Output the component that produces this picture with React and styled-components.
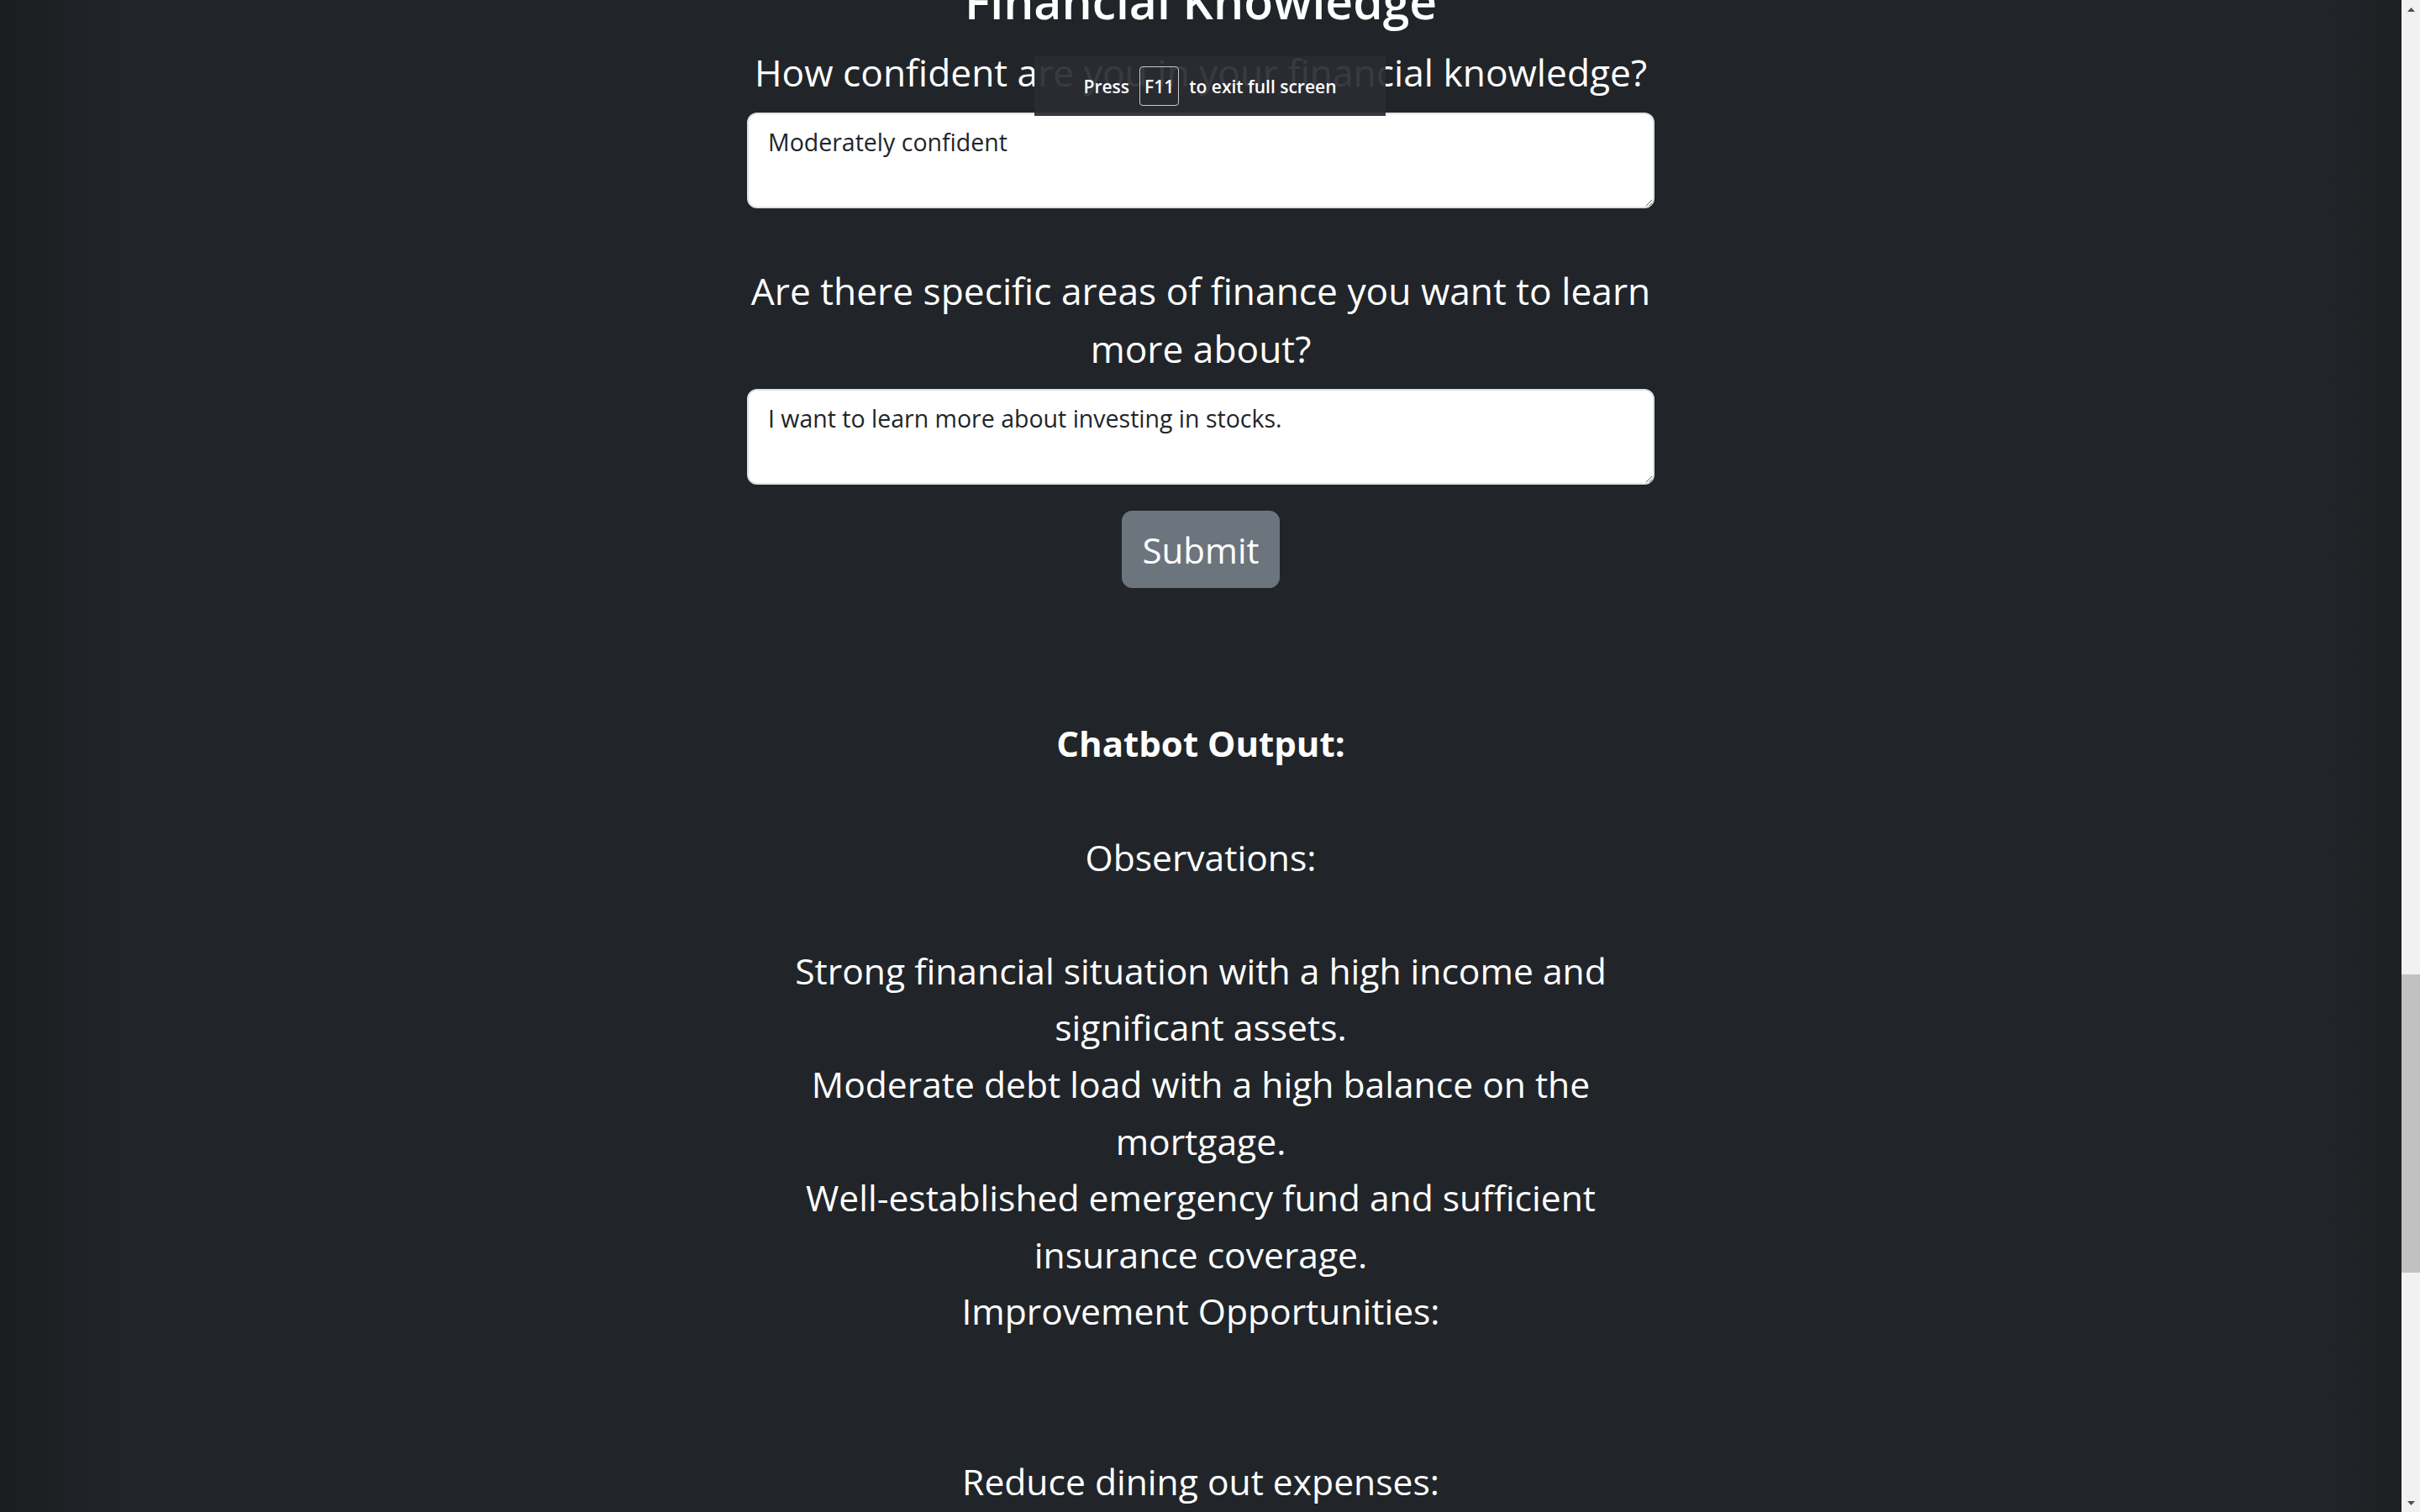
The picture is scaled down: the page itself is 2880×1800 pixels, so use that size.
import React from "react";
import styled, { createGlobalStyle } from "styled-components";

const GlobalStyle = createGlobalStyle`
  html, body {
    margin: 0;
    padding: 0;
    height: 100%;
    overflow: hidden;
    background: #212529;
  }
  body {
    font-family: "Open Sans", "Noto Sans", sans-serif;
    -webkit-font-smoothing: antialiased;
  }
`;

const Screen = styled.div`
  position: relative;
  display: flex;
  height: 100vh;
  overflow: hidden;
`;

const Viewport = styled.main`
  flex: 1;
  overflow: hidden;
  background: linear-gradient(
    90deg,
    #1b1d20 0px,
    #212529 150px,
    #212529 calc(100% - 90px),
    #1d1f22 100%
  );
`;

const Page = styled.div`
  width: 1080px;
  margin: -33px auto 0;
  text-align: center;
  color: #fff;
`;

const Title = styled.h2`
  margin: 0 0 17px;
  font-size: 57px;
  font-weight: 600;
  line-height: 1.2;
`;

const Field = styled.div`
  margin-bottom: ${(p) => p.$gap}px;
`;

const Question = styled.label`
  display: block;
  margin-bottom: 13px;
  font-size: 44.3px;
  line-height: 69px;
`;

const Answer = styled.textarea`
  display: block;
  box-sizing: border-box;
  width: 100%;
  height: 114px;
  padding: 12px 23px;
  border: 2px solid #dee2e6;
  border-radius: 12px;
  background: #fff;
  color: #212529;
  font-family: "Open Sans", sans-serif;
  font-size: 28.5px;
  line-height: 1.5;
  resize: vertical;
  outline: none;
`;

const SubmitButton = styled.button`
  display: inline-block;
  padding: 13.5px 23.5px;
  border: 1px solid #6c757d;
  border-radius: 12px;
  background: #6c757d;
  color: #fff;
  font-family: "Open Sans", sans-serif;
  font-size: 42px;
  line-height: 63px;
  cursor: pointer;
`;

const Output = styled.div`
  margin-top: 151px;
  font-size: 42.6px;
  line-height: 67.6px;
  white-space: pre-line;
`;

const OutputHeading = styled.strong`
  font-weight: 700;
  font-size: 42px;
`;

const Toast = styled.div`
  position: absolute;
  top: 67px;
  left: 50%;
  transform: translateX(-50%);
  width: 418px;
  height: 71px;
  display: flex;
  align-items: center;
  justify-content: center;
  gap: 12px;
  background: rgba(42, 44, 49, 0.93);
  color: #fff;
  font-family: "Open Sans", sans-serif;
  font-size: 21px;
  font-weight: 600;
`;

const KeyCap = styled.span`
  box-sizing: border-box;
  display: flex;
  align-items: center;
  height: 47px;
  padding: 0 5px;
  border: 1.5px solid #c9c9c9;
  border-radius: 4px;
`;

const ScrollBar = styled.aside`
  width: 22px;
  display: flex;
  flex-direction: column;
  background: #f1f1f1;
`;

const ArrowButton = styled.div`
  height: 22px;
  display: flex;
  align-items: center;
  justify-content: center;
`;

const Track = styled.div`
  flex: 1;
`;

const Thumb = styled.div`
  width: 100%;
  background: #c1c1c1;
`;

const Arrow = ({ down }) => (
  <svg width="9" height="5" viewBox="0 0 9 5">
    <polygon
      points={down ? "0,0 9,0 4.5,5" : "0,5 9,5 4.5,0"}
      fill="#505050"
    />
  </svg>
);

const scroll = { docHeight: 8904, viewHeight: 1800, scrollTop: 5770, track: 1756 };

const outputText = `Observations:

Strong financial situation with a high income and significant assets.
Moderate debt load with a high balance on the mortgage.
Well-established emergency fund and sufficient insurance coverage.
Improvement Opportunities:


Reduce dining out expenses:`;

export default function App() {
  const thumbSize = (scroll.track * scroll.viewHeight) / scroll.docHeight;
  const thumbTop =
    (scroll.scrollTop / (scroll.docHeight - scroll.viewHeight)) *
    (scroll.track - thumbSize);

  return (
    <>
      <GlobalStyle />
      <Screen>
        <Viewport>
          <Page>
            <Title>Financial Knowledge</Title>
            <Field $gap={64}>
              <Question>How confident are you in your financial knowledge?</Question>
              <Answer defaultValue="Moderately confident" />
            </Field>
            <Field $gap={31}>
              <Question>
                Are there specific areas of finance you want to learn more about?
              </Question>
              <Answer defaultValue="I want to learn more about investing in stocks." />
            </Field>
            <SubmitButton type="button">Submit</SubmitButton>
            <Output>
              <OutputHeading>Chatbot Output:</OutputHeading>
              {"\n\n"}
              {outputText}
            </Output>
          </Page>
        </Viewport>
        <ScrollBar>
          <ArrowButton>
            <Arrow />
          </ArrowButton>
          <Track>
            <Thumb style={{ marginTop: thumbTop, height: thumbSize }} />
          </Track>
          <ArrowButton>
            <Arrow down />
          </ArrowButton>
        </ScrollBar>
        <Toast>
          <span>Press</span>
          <KeyCap>F11</KeyCap>
          <span>to exit full screen</span>
        </Toast>
      </Screen>
    </>
  );
}
